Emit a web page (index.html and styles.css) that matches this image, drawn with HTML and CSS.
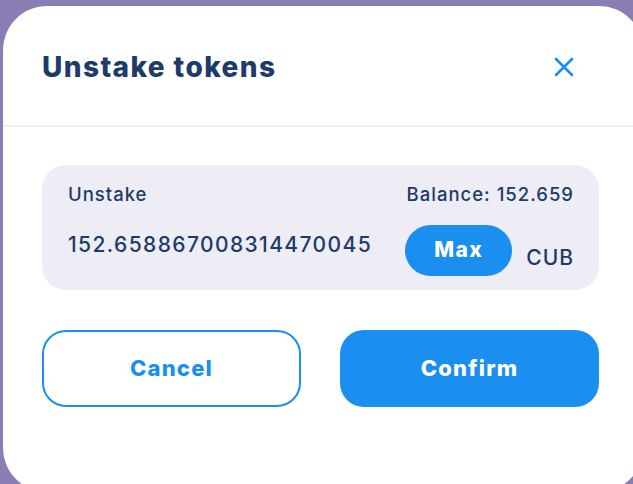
FILE: index.html
```html
<!DOCTYPE html>
<html>
<head>
  <meta charset="UTF-8">
  <title>Unstake tokens</title>
  <link rel="stylesheet" href="styles.css">
</head>
<body>
  <div class="modal">
    <div class="modal-header">
      <h2>Unstake tokens</h2>
      <button class="close" aria-label="Close">
        <svg width="20" height="20" viewBox="0 0 20 20">
          <path d="M2 2 L18 18 M18 2 L2 18" stroke="#1b8ff0" stroke-width="2.6" stroke-linecap="round" fill="none"/>
        </svg>
      </button>
    </div>
    <div class="modal-body">
      <div class="stake-box">
        <div class="row">
          <span>Unstake</span>
          <span>Balance: 152.659</span>
        </div>
        <div class="row amount-row">
          <span class="amount">152.658867008314470045</span>
          <div class="right">
            <button class="max">Max</button>
            <span class="unit">CUB</span>
          </div>
        </div>
      </div>
      <div class="actions">
        <button class="btn btn-outline">Cancel</button>
        <button class="btn btn-fill">Confirm</button>
      </div>
    </div>
  </div>
</body>
</html>
```
FILE: styles.css
```css
html, body {
  height: 100%;
}
body {
  margin: 0;
  background: #8b7db4;
  font-family: Inter, "Noto Sans", sans-serif;
  overflow: hidden;
}
.modal {
  margin: 6px 0 0 3px;
  width: 640px;
  height: 486px;
  background: #fff;
  border-radius: 44px;
  box-sizing: border-box;
}
.modal-header {
  display: flex;
  justify-content: space-between;
  align-items: center;
  height: 121px;
  padding: 0 69px 0 39px;
  border-bottom: 2px solid #efefef;
  box-sizing: border-box;
}
.modal-header h2 {
  margin: 0;
  padding-top: 2px;
  font-size: 28px;
  font-weight: 800;
  color: #1d3b6a;
  letter-spacing: 1.4px;
}
.close {
  background: none;
  border: none;
  padding: 0;
  cursor: pointer;
  display: flex;
  margin-top: 2px;
}
.modal-body {
  padding: 38px 34px 0 39px;
}
.stake-box {
  width: 557px;
  height: 125px;
  background: #eeecf5;
  border-radius: 24px;
  padding: 18px 25px 0 26px;
  box-sizing: border-box;
  color: #1d3b6a;
}
.row {
  display: flex;
  justify-content: space-between;
  align-items: center;
  font-size: 18.5px;
  font-weight: 500;
  letter-spacing: 1px;
}
.amount-row {
  align-items: flex-start;
  margin-top: 20px;
}
.amount {
  margin-top: 7px;
  font-size: 21px;
  font-weight: 500;
  letter-spacing: 1.4px;
}
.right {
  display: flex;
  align-items: flex-end;
  gap: 14px;
}
.max {
  width: 107px;
  height: 51px;
  border: none;
  border-radius: 26px;
  background: #1b8ff0;
  color: #fff;
  font-family: inherit;
  font-size: 21px;
  font-weight: 800;
  letter-spacing: 1.5px;
  padding-bottom: 4px;
  cursor: pointer;
}
.unit {
  font-size: 21px;
  font-weight: 500;
  padding-bottom: 6px;
}
.actions {
  display: flex;
  justify-content: space-between;
  margin-top: 40px;
  width: 557px;
}
.btn {
  width: 259px;
  height: 77px;
  border-radius: 24px;
  font-family: inherit;
  font-size: 22px;
  font-weight: 800;
  letter-spacing: 1.2px;
  cursor: pointer;
  box-sizing: border-box;
  padding-bottom: 2px;
}
.btn-outline {
  background: #fff;
  border: 2.5px solid #1b8ff0;
  color: #1b8ff0;
}
.btn-fill {
  background: #1b8ff0;
  border: none;
  color: #fff;
}
```
